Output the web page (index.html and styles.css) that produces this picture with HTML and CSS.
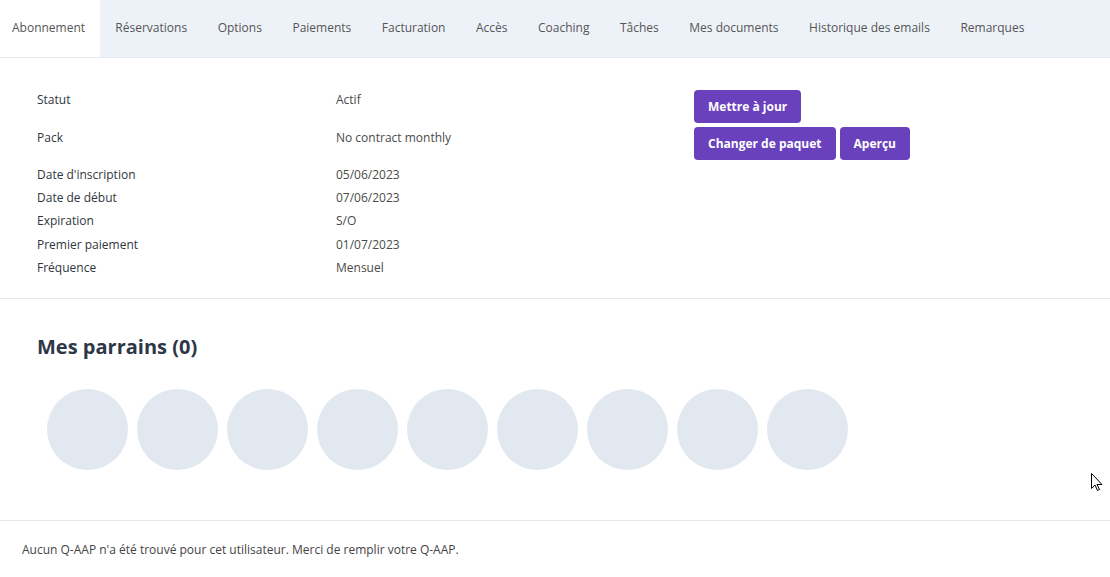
FILE: index.html
```html
<!DOCTYPE html>
<html lang="fr">
<head>
<meta charset="utf-8">
<link rel="stylesheet" href="styles.css">
</head>
<body>
<nav class="tabs">
  <a class="tab active">Abonnement</a>
  <a class="tab">Réservations</a>
  <a class="tab">Options</a>
  <a class="tab">Paiements</a>
  <a class="tab">Facturation</a>
  <a class="tab">Accès</a>
  <a class="tab">Coaching</a>
  <a class="tab">Tâches</a>
  <a class="tab">Mes documents</a>
  <a class="tab">Historique des emails</a>
  <a class="tab">Remarques</a>
</nav>

<section class="subscription">
  <div class="details">
    <div class="row first"><span class="label">Statut</span><span class="value">Actif</span></div>
    <div class="row second"><span class="label">Pack</span><span class="value">No contract monthly</span></div>
    <div class="row"><span class="label">Date d'inscription</span><span class="value">05/06/2023</span></div>
    <div class="row"><span class="label">Date de début</span><span class="value">07/06/2023</span></div>
    <div class="row"><span class="label">Expiration</span><span class="value">S/O</span></div>
    <div class="row"><span class="label">Premier paiement</span><span class="value">01/07/2023</span></div>
    <div class="row"><span class="label">Fréquence</span><span class="value">Mensuel</span></div>
  </div>
  <div class="actions">
    <div class="btn-row"><button class="btn">Mettre à jour</button></div>
    <div class="btn-row"><button class="btn">Changer de paquet</button><button class="btn">Aperçu</button></div>
  </div>
</section>

<section class="sponsors">
  <h2>Mes parrains (0)</h2>
  <div class="avatars">
    <span class="avatar"></span><span class="avatar"></span><span class="avatar"></span>
    <span class="avatar"></span><span class="avatar"></span><span class="avatar"></span>
    <span class="avatar"></span><span class="avatar"></span><span class="avatar"></span>
  </div>
</section>

<footer class="qaap">Aucun Q-AAP n'a été trouvé pour cet utilisateur. Merci de remplir votre Q-AAP.</footer>

<svg class="cursor" width="12" height="19" viewBox="0 0 12 19"><path d="M0.5 0.5 L0.5 15.5 L4 12 L6.5 17.5 L8.5 16.5 L6 11.5 L11 11.5 Z" fill="#fff" stroke="#000" stroke-width="1"/></svg>
</body>
</html>
```

FILE: styles.css
```css
* { box-sizing: border-box; }
html, body { margin: 0; padding: 0; background: #fff; }
body {
  font-family: "Open Sans", "Noto Sans", sans-serif;
  font-size: 12px;
  color: #333;
  position: relative;
  width: 1110px;
  height: 577px;
  overflow: hidden;
}
.tabs {
  display: flex;
  height: 58px;
  background: #edf2f9;
  border-bottom: 1px solid #e6ebf2;
}
.tab {
  display: flex;
  align-items: center;
  padding: 0 15.25px 2px;
  color: #555;
  font-size: 12px;
  white-space: nowrap;
}
.tab.active {
  background: #fff;
  padding-left: 12px;
  padding-right: 15px;
}
.subscription {
  display: flex;
  padding: 30px 0 20px 37px;
  border-bottom: 1px solid #e5e7eb;
  height: 241px;
}
.details { width: 657px; }
.row {
  display: grid;
  grid-template-columns: 299px 1fr;
  height: 23px;
  align-items: center;
}
.row.first { margin-bottom: 15px; }
.row.second { margin-bottom: 14px; }
.row:nth-child(n+6) { transform: translateY(1px); }
.label { color: #2f3640; }
.value { color: #4a4a4a; }
.actions { display: flex; flex-direction: column; gap: 4px; margin-top: 2px; }
.btn-row { display: flex; gap: 4px; }
.btn {
  border: 0;
  border-radius: 4px;
  background: #6941bd;
  color: #fff;
  font-family: inherit;
  font-weight: 700;
  font-size: 12px;
  height: 33px;
  padding: 0 14px;
}
.sponsors {
  padding: 34px 0 50px 37px;
  border-bottom: 1px solid #e5e7eb;
  height: 222px;
}
.sponsors h2 {
  margin: 0 0 29px;
  font-size: 20px;
  font-weight: 700;
  color: #2d3748;
}
.avatars { display: flex; gap: 9px; padding-left: 10px; }
.avatar {
  width: 81px;
  height: 81px;
  border-radius: 50%;
  background: #e2e8f0;
}
.qaap {
  padding: 20px 22px;
  color: #444;
  font-size: 12px;
}
.cursor { position: absolute; left: 1091px; top: 473px; }
```
